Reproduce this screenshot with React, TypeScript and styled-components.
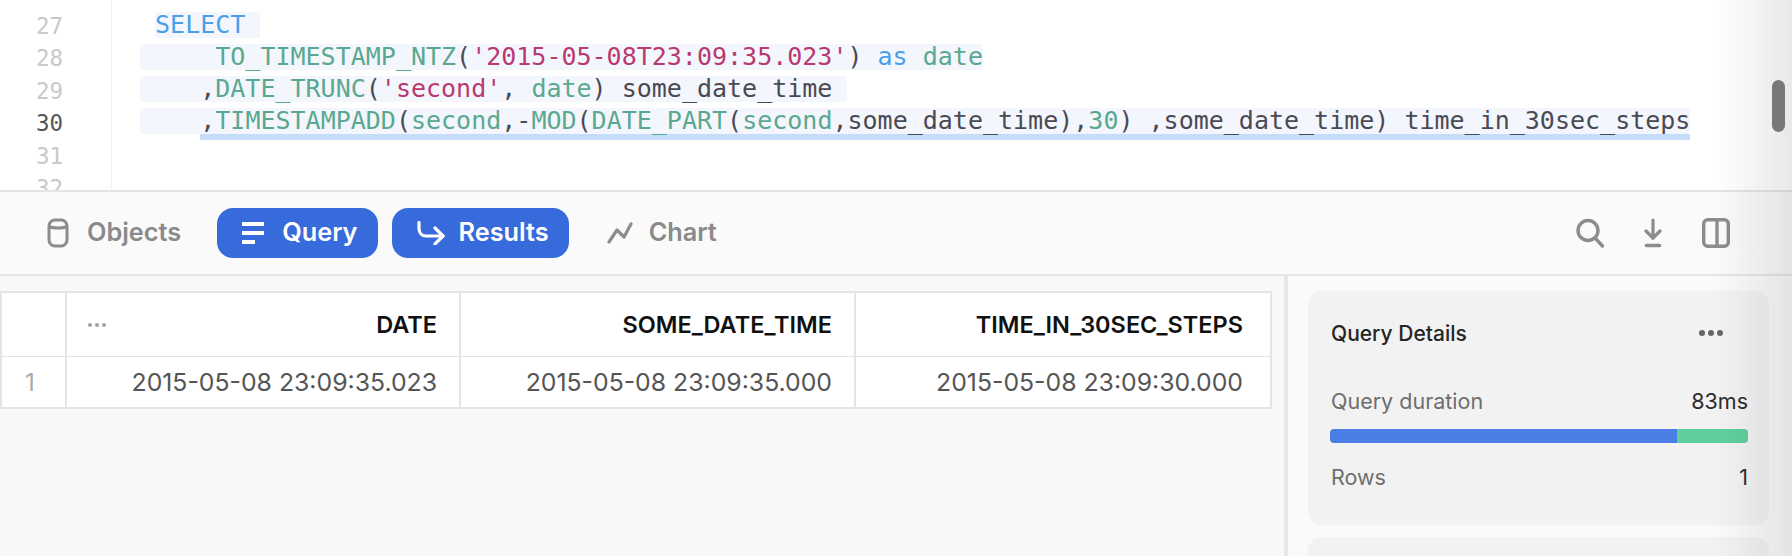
import React from 'react';
import styled, { createGlobalStyle } from 'styled-components';

const GlobalStyle = createGlobalStyle`
  html, body {
    margin: 0;
    padding: 0;
    background: #ffffff;
  }
  * {
    box-sizing: border-box;
  }
`;

function ObjectsIcon() {
  return (
    <svg width="22" height="30" viewBox="0 0 22 30" fill="none" stroke="#8c8c8c" strokeWidth="3">
      <rect x="2" y="2" width="18" height="26" rx="6" />
      <path d="M2 8c2 2.6 16 2.6 18 0" />
    </svg>
  );
}

function QueryIcon() {
  return (
    <svg width="22" height="24" viewBox="0 0 22 24" fill="#ffffff">
      <rect x="0" y="1" width="22" height="4" />
      <rect x="0" y="10" width="22" height="4" />
      <rect x="0" y="19" width="13" height="4" />
    </svg>
  );
}

function ResultsIcon() {
  return (
    <svg width="28" height="24" viewBox="0 0 28 24" fill="none" stroke="#ffffff" strokeWidth="3.2" strokeLinecap="round" strokeLinejoin="round">
      <path d="M2 1.5v6c0 4.5 3 7.5 7 7.5h17" />
      <path d="M18 7l8 8-8 8" />
    </svg>
  );
}

function ChartIcon() {
  return (
    <svg width="26" height="22" viewBox="0 0 26 22" fill="none" stroke="#8c8c8c" strokeWidth="3.2" strokeLinecap="round" strokeLinejoin="round">
      <path d="M2 20l8-12 7 7 7-13" />
    </svg>
  );
}

function SearchIcon() {
  return (
    <svg width="28" height="30" viewBox="0 0 28 30" fill="none" stroke="#8c8c8c" strokeWidth="3.4" strokeLinecap="round">
      <circle cx="12" cy="12.5" r="10" />
      <path d="M19.5 20.5l7 7.5" />
    </svg>
  );
}

function DownloadIcon() {
  return (
    <svg width="18" height="30" viewBox="0 0 18 30" fill="none" stroke="#8c8c8c" strokeWidth="3.2" strokeLinecap="round" strokeLinejoin="round">
      <path d="M9 2v18" />
      <path d="M2 13l7 7 7-7" />
      <path d="M2.5 27.5h13" strokeWidth="3.6" />
    </svg>
  );
}

function PanelIcon() {
  return (
    <svg width="28" height="30" viewBox="0 0 28 30" fill="none" stroke="#8c8c8c" strokeWidth="3.4">
      <rect x="1.7" y="1.7" width="24.6" height="26.6" rx="4" />
      <path d="M15 2v26" />
    </svg>
  );
}

function App() {
  return (
    <>
      <GlobalStyle />
      <Page>
        <Editor>
          <Gutter>
            <LineNo>27</LineNo>
            <LineNo>28</LineNo>
            <LineNo>29</LineNo>
            <LineNo $active>30</LineNo>
            <LineNo>31</LineNo>
            <LineNo>32</LineNo>
          </Gutter>
          <Code>
            <CodeLine>
              {' '}
              <Mark $square>
                <Keyword>SELECT</Keyword>{' '}
              </Mark>
            </CodeLine>
            <CodeLine>
              <Mark>
                {'     '}
                <Fn>TO_TIMESTAMP_NTZ</Fn>(<Str>'2015-05-08T23:09:35.023'</Str>) <Keyword>as</Keyword> <Fn>date</Fn>
              </Mark>
            </CodeLine>
            <CodeLine>
              <Mark>
                {'    ,'}
                <Fn>DATE_TRUNC</Fn>(<Str>'second'</Str>, <Fn>date</Fn>) some_date_time{' '}
              </Mark>
            </CodeLine>
            <CodeLine>
              <Mark>
                {'    '}
                <Underlined>
                  ,<Fn>TIMESTAMPADD</Fn>(<Fn>second</Fn>,-<Fn>MOD</Fn>(<Fn>DATE_PART</Fn>(<Fn>second</Fn>,some_date_time),<Fn>30</Fn>) ,some_date_time) time_in_30sec_steps
                </Underlined>
              </Mark>
            </CodeLine>
          </Code>
        </Editor>

        <Toolbar>
          <Tab $gap={18}>
            <ObjectsIcon />
            <TabLabel>Objects</TabLabel>
          </Tab>
          <Tab $gap={18} $active>
            <QueryIcon />
            <TabLabel>Query</TabLabel>
          </Tab>
          <Tab $gap={14} $active>
            <ResultsIcon />
            <TabLabel>Results</TabLabel>
          </Tab>
          <Tab $gap={16}>
            <ChartIcon />
            <TabLabel>Chart</TabLabel>
          </Tab>
          <ToolIcons>
            <SearchIcon />
            <DownloadIcon />
            <PanelIcon />
          </ToolIcons>
        </Toolbar>

        <Content>
          <ResultsPane>
            <ResultsTable>
              <colgroup>
                <col width="65" />
                <col width="394" />
                <col width="395" />
                <col width="416" />
              </colgroup>
              <thead>
                <tr>
                  <CornerCell />
                  <HeadCell>
                    <ColumnMenu>
                      <Dot $size={4} $color="#a3a3a3" />
                      <Dot $size={4} $color="#a3a3a3" />
                      <Dot $size={4} $color="#a3a3a3" />
                    </ColumnMenu>
                    DATE
                  </HeadCell>
                  <HeadCell>SOME_DATE_TIME</HeadCell>
                  <HeadCell>TIME_IN_30SEC_STEPS</HeadCell>
                </tr>
              </thead>
              <tbody>
                <tr>
                  <RowNumber>1</RowNumber>
                  <ValueCell>2015-05-08 23:09:35.023</ValueCell>
                  <ValueCell>2015-05-08 23:09:35.000</ValueCell>
                  <ValueCell>2015-05-08 23:09:30.000</ValueCell>
                </tr>
              </tbody>
            </ResultsTable>
          </ResultsPane>
          <SidePane>
            <Card>
              <CardHeader>
                <CardTitle>Query Details</CardTitle>
                <MoreDots>
                  <Dot $size={6} $color="#666666" />
                  <Dot $size={6} $color="#666666" />
                  <Dot $size={6} $color="#666666" />
                </MoreDots>
              </CardHeader>
              <StatRow>
                <StatLabel>Query duration</StatLabel>
                <StatValue>83ms</StatValue>
              </StatRow>
              <DurationBar>
                <BarPart $color="#4a7ee4" style={{ width: '83%' }} />
                <BarPart $color="#5fd09c" style={{ width: '17%' }} />
              </DurationBar>
              <StatRow>
                <StatLabel>Rows</StatLabel>
                <StatValue>1</StatValue>
              </StatRow>
            </Card>
            <NextCard />
          </SidePane>
        </Content>

        <EdgeFade />
        <ScrollThumb />
      </Page>
    </>
  );
}

export default App;

const Page = styled.div`
  position: relative;
  display: flex;
  flex-direction: column;
  width: 1792px;
  height: 556px;
  overflow: hidden;
  background: #ffffff;
  font-family: Inter, "Liberation Sans", sans-serif;
`;

const Editor = styled.section`
  display: flex;
  flex: none;
  height: 192px;
  overflow: hidden;
  border-bottom: 2px solid #e4e4e4;
  background: #ffffff;
`;

const Gutter = styled.div`
  flex: none;
  width: 112px;
  padding: 10px 48px 0 0;
  border-right: 1px solid #f1f1f1;
`;

const LineNo = styled.div<{ $active?: boolean }>`
  height: 32.4px;
  font-family: "DejaVu Sans Mono", monospace;
  font-size: 22.5px;
  line-height: 32px;
  text-align: right;
  color: ${(p) => (p.$active ? '#555555' : '#c9c9c9')};
`;

const Code = styled.div`
  padding: 9px 0 0 28px;
  font-family: "DejaVu Sans Mono", monospace;
  font-size: 25px;
  color: #4a4a54;
  white-space: pre;
`;

const CodeLine = styled.div`
  height: 32px;
  padding-top: 3px;
`;

const Mark = styled.span<{ $square?: boolean }>`
  display: inline-block;
  height: 26px;
  line-height: 26px;
  vertical-align: top;
  background: #f4f6fd;
  border-radius: ${(p) => (p.$square ? '0' : '4px')};
`;

const Underlined = styled.span`
  display: inline-block;
  height: 26px;
  vertical-align: top;
  box-shadow: 0 6px 0 #c5dcfb;
`;

const Keyword = styled.span`
  color: #4a9fe8;
`;

const Fn = styled.span`
  color: #5aa88f;
`;

const Str = styled.span`
  color: #b83a6e;
`;

const Toolbar = styled.nav`
  display: flex;
  flex: none;
  align-items: center;
  gap: 14px;
  height: 84px;
  padding: 0 62px 0 22px;
  border-bottom: 2px solid #e6e6e6;
  background: #fafafa;
`;

const Tab = styled.button<{ $active?: boolean; $gap: number }>`
  display: flex;
  align-items: center;
  gap: ${(p) => p.$gap}px;
  height: 50px;
  padding: 0 20px 0 25px;
  border: 0;
  border-radius: 16px;
  font-family: inherit;
  font-size: 25.3px;
  font-weight: 600;
  color: ${(p) => (p.$active ? '#ffffff' : '#8a8a8a')};
  background: ${(p) => (p.$active ? '#376bdc' : 'transparent')};

  &:first-child {
    margin-right: 2px;
  }

  &:nth-child(4) {
    margin-left: -1px;
  }
`;

const TabLabel = styled.span`
  padding-bottom: 4px;
`;

const ToolIcons = styled.div`
  display: flex;
  align-items: center;
  gap: 40px;
  margin-left: auto;
`;

const Content = styled.main`
  display: flex;
  flex: 1;
  min-height: 0;
`;

const ResultsPane = styled.div`
  flex: none;
  width: 1288px;
  padding-top: 15px;
  border-right: 4px solid #e6e6e6;
  background: #f8f8f8;
`;

const ResultsTable = styled.table`
  width: 1270px;
  table-layout: fixed;
  border-collapse: separate;
  border-spacing: 0;
  border-top: 2px solid #e4e4e4;
  border-left: 2px solid #e4e4e4;
  border-bottom: 2px solid #e4e4e4;
  background: #ffffff;
`;

const HeadCell = styled.th`
  position: relative;
  height: 64px;
  padding: 0 22px 0 0;
  border-right: 2px solid #e4e4e4;
  border-bottom: 1px solid #e4e4e4;
  font-size: 23.5px;
  font-weight: 600;
  text-align: right;
  color: #111111;

  &:last-child {
    padding-right: 27px;
  }
`;

const CornerCell = styled.th`
  border-right: 2px solid #e4e4e4;
  border-bottom: 1px solid #e4e4e4;
`;

const ColumnMenu = styled.span`
  position: absolute;
  top: 30px;
  left: 21px;
  display: flex;
  gap: 3px;
`;

const ValueCell = styled.td`
  height: 50px;
  padding: 0 22px 0 0;
  border-right: 2px solid #e4e4e4;
  font-size: 24.8px;
  text-align: right;
  color: #555555;

  &:last-child {
    padding-right: 27px;
  }
`;

const RowNumber = styled.td`
  height: 50px;
  padding-left: 23px;
  border-right: 2px solid #e4e4e4;
  font-size: 24px;
  color: #aaaaaa;
`;

const SidePane = styled.aside`
  display: flex;
  flex: 1;
  flex-direction: column;
  gap: 12px;
  padding: 15px 23px 0 20px;
  background: #fafafa;
`;

const Card = styled.section`
  flex: none;
  height: 234px;
  padding: 21px 21px 0 23px;
  border-radius: 14px;
  background: #f2f2f2;
`;

const NextCard = styled.div`
  flex: 1;
  border-radius: 14px 14px 0 0;
  background: #f2f2f2;
`;

const CardHeader = styled.header`
  display: flex;
  align-items: center;
  justify-content: space-between;
  height: 42px;
  margin-bottom: 32px;
  padding-right: 25px;
`;

const CardTitle = styled.h2`
  margin: 0;
  font-size: 21px;
  font-weight: 500;
  color: #252525;
`;

const MoreDots = styled.div`
  display: flex;
  gap: 3px;
`;

const Dot = styled.span<{ $size: number; $color: string }>`
  width: ${(p) => p.$size}px;
  height: ${(p) => p.$size}px;
  border-radius: 50%;
  background: ${(p) => p.$color};
`;

const StatRow = styled.div`
  display: flex;
  align-items: center;
  justify-content: space-between;
  height: 30px;
  font-size: 21.5px;
`;

const StatLabel = styled.span`
  color: #6e6e6e;
`;

const StatValue = styled.span`
  color: #2c2c2c;
`;

const DurationBar = styled.div`
  display: flex;
  height: 14px;
  margin: 13px 0 19px -1px;
  overflow: hidden;
  border-radius: 4px;
`;

const BarPart = styled.div<{ $color: string }>`
  height: 100%;
  background: ${(p) => p.$color};
`;

const EdgeFade = styled.div`
  position: absolute;
  top: 0;
  right: 0;
  bottom: 0;
  width: 76px;
  background: linear-gradient(to right, rgba(0, 0, 0, 0), rgba(0, 0, 0, 0.09));
  pointer-events: none;
`;

const ScrollThumb = styled.div`
  position: absolute;
  top: 80px;
  left: 1772px;
  width: 13px;
  height: 52px;
  border-radius: 7px;
  background: #787878;
`;
